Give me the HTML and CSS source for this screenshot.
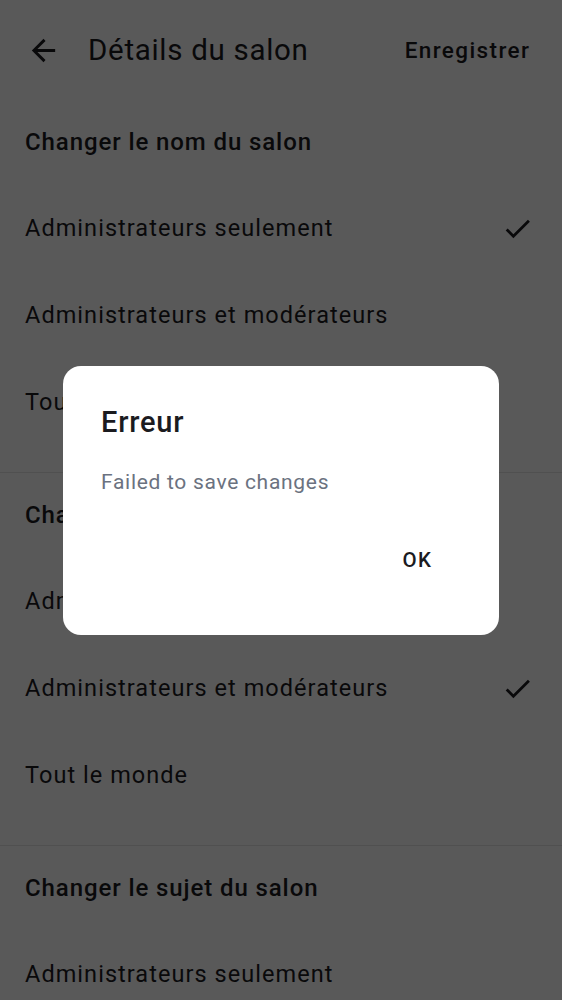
FILE: index.html
```html
<!DOCTYPE html>
<html lang="fr">
<head>
<meta charset="utf-8">
<title>Détails du salon</title>
<link rel="stylesheet" href="styles.css">
</head>
<body>
<div class="screen">
  <header class="toolbar">
    <svg class="back" viewBox="0 0 24 24" width="35" height="35"><path d="M20 11H7.83l5.59-5.59L12 4l-8 8 8 8 1.41-1.41L7.83 13H20v-2z" fill="#1c1b1f"/></svg>
    <h1 class="title">Détails du salon</h1>
    <span class="save">Enregistrer</span>
  </header>

  <section class="section">
    <div class="section-head">Changer le nom du salon</div>
    <div class="item"><span>Administrateurs seulement</span><svg class="check" viewBox="0 0 24 24" width="33" height="33"><path d="M9 16.17L4.83 12l-1.42 1.41L9 19 21 7l-1.41-1.41z" fill="#1c1b1f"/></svg></div>
    <div class="item"><span>Administrateurs et modérateurs</span></div>
    <div class="item"><span>Tout le monde</span></div>
  </section>

  <section class="section">
    <div class="section-head">Changer l'avatar du salon</div>
    <div class="item"><span>Administrateurs seulement</span></div>
    <div class="item"><span>Administrateurs et modérateurs</span><svg class="check" viewBox="0 0 24 24" width="33" height="33"><path d="M9 16.17L4.83 12l-1.42 1.41L9 19 21 7l-1.41-1.41z" fill="#1c1b1f"/></svg></div>
    <div class="item"><span>Tout le monde</span></div>
  </section>

  <section class="section">
    <div class="section-head">Changer le sujet du salon</div>
    <div class="item"><span>Administrateurs seulement</span></div>
  </section>
</div>

<div class="scrim">
  <div class="dialog">
    <h2 class="dialog-title">Erreur</h2>
    <p class="dialog-text">Failed to save changes</p>
    <div class="dialog-actions">
      <span class="btn">OK</span>
    </div>
  </div>
</div>
</body>
</html>
```
FILE: styles.css
```css
html, body {
  margin: 0;
  padding: 0;
}
body {
  font-family: Roboto, "Noto Sans", sans-serif;
  background: #ffffff;
  color: #1c1b1f;
  width: 562px;
  height: 1000px;
  overflow: hidden;
}
.screen {
  width: 562px;
}
.toolbar {
  display: flex;
  align-items: center;
  height: 100px;
  padding: 0 31.6px 0 26px;
  box-sizing: border-box;
}
.back {
  flex: none;
  display: block;
}
.title {
  margin: 0 0 0 27px;
  font-size: 29.5px;
  font-weight: 400;
  line-height: 36px;
  letter-spacing: 0.7px;
}
.save {
  margin-left: auto;
  font-size: 22.5px;
  font-weight: 500;
  line-height: 28px;
  letter-spacing: 1.4px;
}
.section {
  padding-bottom: 25px;
  border-bottom: 1px solid #e4e4e4;
}
.section-head {
  height: 86px;
  box-sizing: border-box;
  padding: 0 0 2px 25px;
  display: flex;
  align-items: center;
  font-size: 24px;
  font-weight: 500;
  letter-spacing: 0.9px;
}
.item {
  height: 87px;
  box-sizing: border-box;
  display: flex;
  align-items: center;
  justify-content: space-between;
  padding: 0 28px 3px 25px;
  font-size: 23.5px;
  font-weight: 400;
  letter-spacing: 1.05px;
}
.check {
  display: block;
  flex: none;
}
.scrim {
  position: fixed;
  inset: 0;
  background: rgba(0, 0, 0, 0.65);
  display: flex;
  align-items: center;
  justify-content: center;
}
.dialog {
  width: 436px;
  box-sizing: border-box;
  background: #ffffff;
  border-radius: 18px;
  padding: 38px 50.5px 51px 38px;
}
.dialog-title {
  margin: 0;
  font-size: 29px;
  font-weight: 500;
  line-height: 36px;
  letter-spacing: 0.8px;
  color: #1b1b1f;
}
.dialog-text {
  margin: 28px 0 0;
  font-size: 21px;
  line-height: 28px;
  letter-spacing: 0.7px;
  color: #6b7280;
}
.dialog-actions {
  display: flex;
  justify-content: flex-end;
  margin-top: 40px;
}
.btn {
  padding: 10px 16px;
  font-size: 20.5px;
  font-weight: 500;
  line-height: 28px;
  letter-spacing: 1.5px;
  color: #1b1b1f;
}
```
